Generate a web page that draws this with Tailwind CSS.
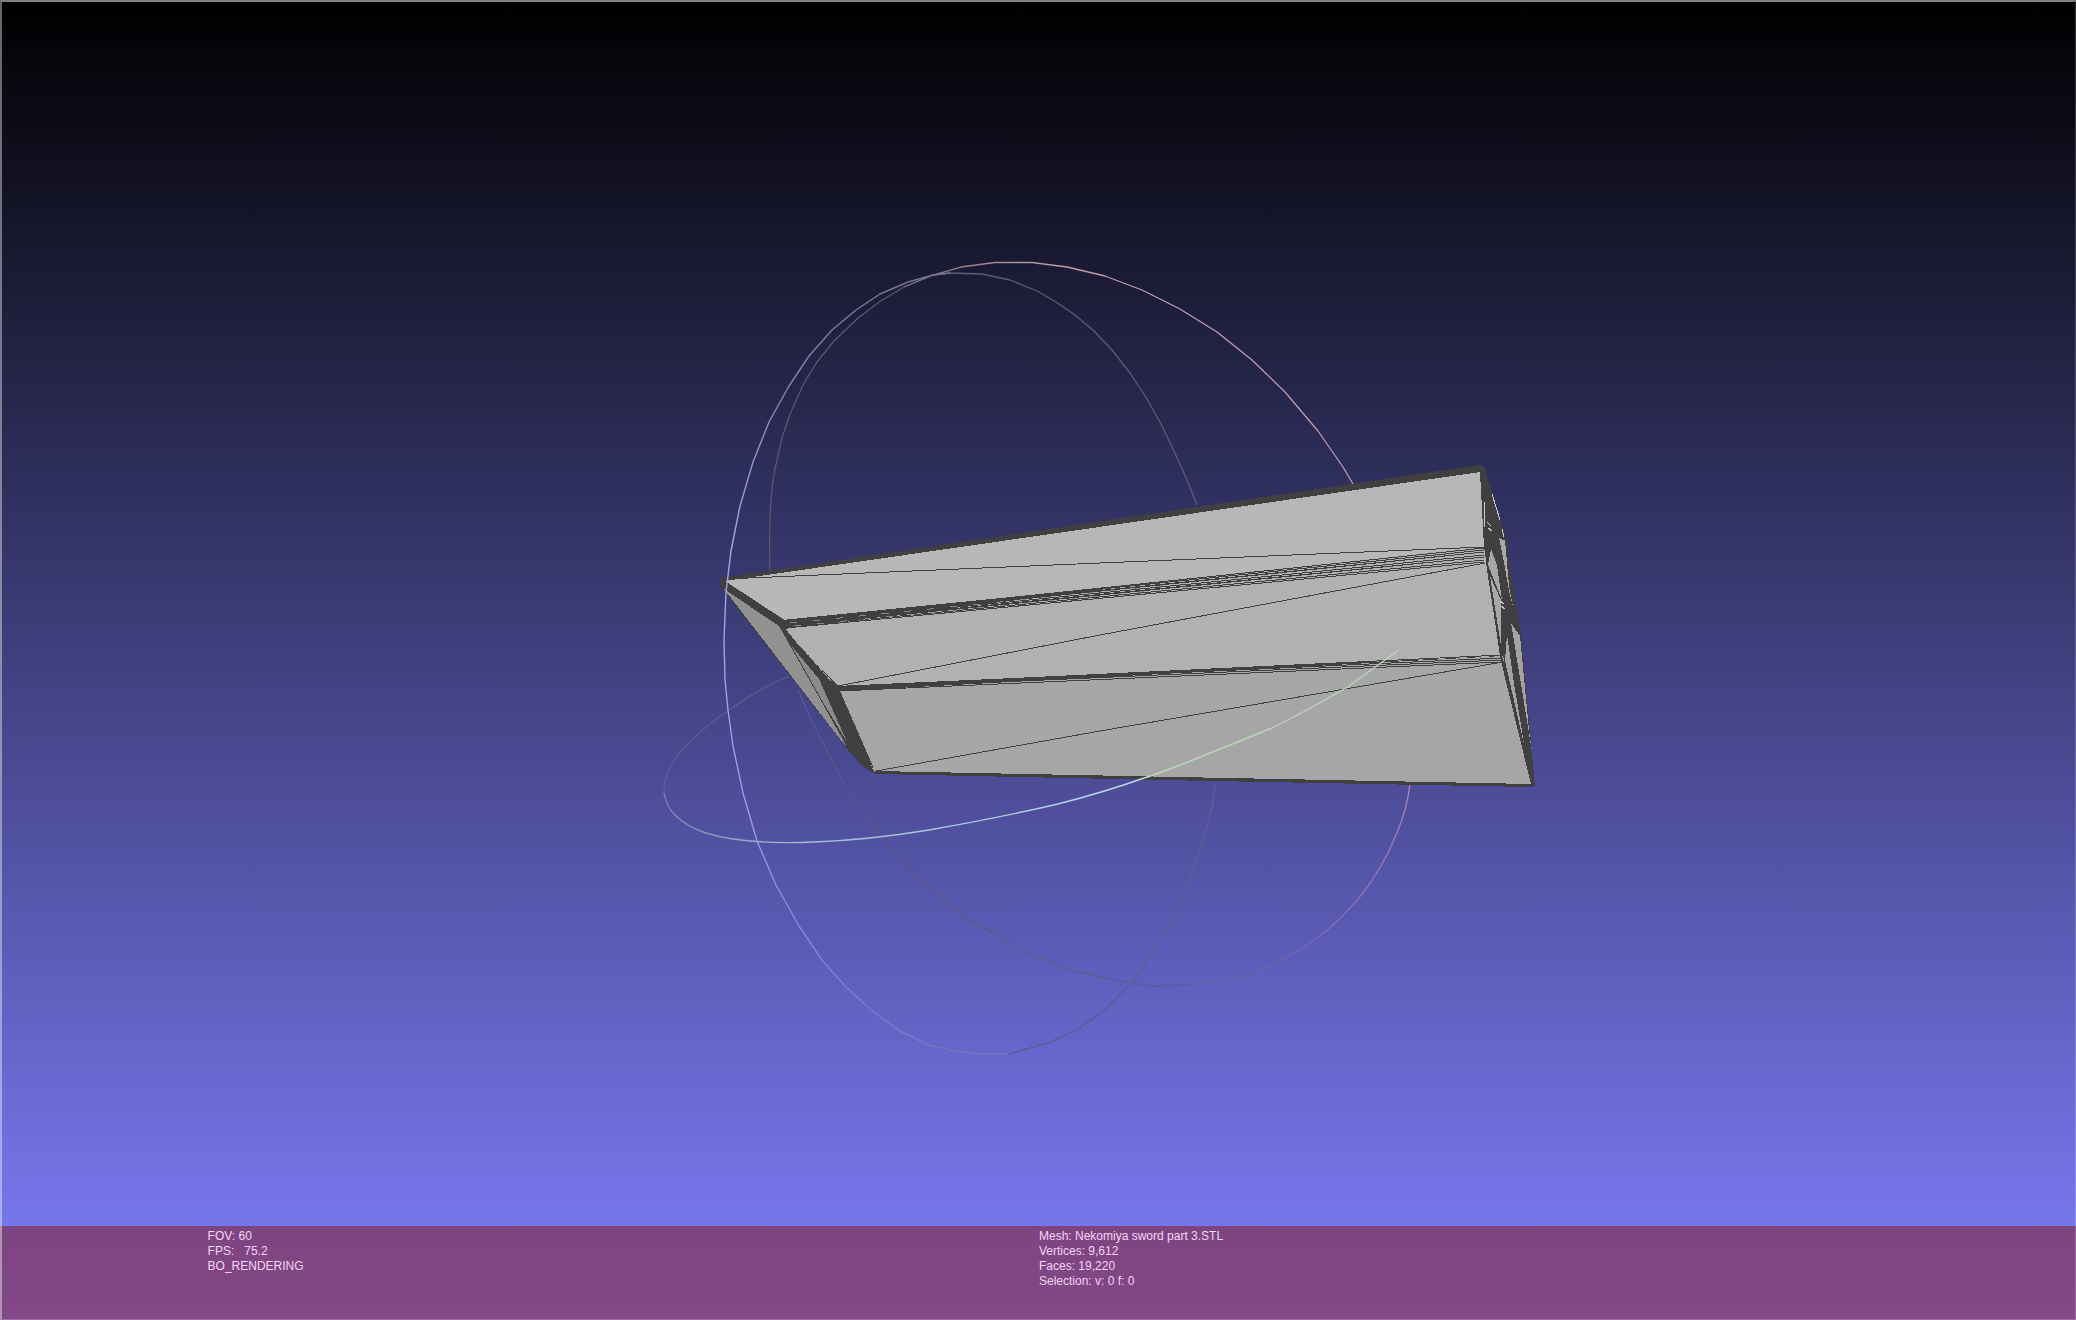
<!DOCTYPE html>
<html lang="en">
<head>
<meta charset="utf-8">
<title>Mesh viewer</title>
<script src="https://cdn.jsdelivr.net/npm/@tailwindcss/browser@4"></script>
</head>
<body class="font-['Liberation_Sans',Arial,sans-serif]">
<div class="relative flex h-screen flex-col overflow-hidden bg-linear-to-b/srgb from-black to-[#8080ff]">
  <main class="min-h-0 flex-1">
    <svg class="block h-full w-full" viewBox="0 0 2076 1226" preserveAspectRatio="xMidYMid meet" fill="none" role="img" aria-label="Wireframe view of the mesh with trackball">
      <defs>
        <linearGradient id="red" gradientUnits="userSpaceOnUse" x1="900" y1="0" x2="1060" y2="0"><stop stop-color="#777080"/><stop offset="1" stop-color="#c09aac"/></linearGradient>
        <linearGradient id="redlow" gradientUnits="userSpaceOnUse" x1="0" y1="784" x2="0" y2="985"><stop stop-color="#b48cbd"/><stop offset=".45" stop-color="#9074b4"/><stop offset=".8" stop-color="#7468ae"/><stop offset="1" stop-color="#605fa0"/></linearGradient>
        <linearGradient id="blue" gradientUnits="userSpaceOnUse" x1="0" y1="272" x2="0" y2="1054"><stop stop-color="#777289"/><stop offset=".15" stop-color="#8482b4"/><stop offset=".35" stop-color="#a7a2ee"/><stop offset=".7" stop-color="#9c96f0"/><stop offset="1" stop-color="#7473be"/></linearGradient>
        <linearGradient id="green" gradientUnits="userSpaceOnUse" x1="664" y1="0" x2="1150" y2="0"><stop stop-color="#7c83b2"/><stop offset=".25" stop-color="#9fbbd0"/><stop offset="1" stop-color="#b9dce8"/></linearGradient>
      </defs>

      <!-- far side of the trackball -->
      <g stroke-width="1.3" stroke-linejoin="round">
        <path stroke="#5a586e" d="M770 575Q768 505 775 469L782 438L790 414L804 383L817 362L834 341L857 319L879 302L904 287L933 275"/>
        <path stroke="#5e5c74" d="M933 275L950 273L982 274L1010 280L1037 291L1056 302L1075 315L1094 331L1112 350L1130 373L1147 399L1161 424L1174 451L1187 480L1197 505"/>
        <path stroke="#5f5d8c" d="M789 676Q756 690 729 710Q700 730 682 750Q663 773 664 793"/>
        <path stroke="#5a5884" d="M798 690L812 722L841 778L882 837L923 883L965 918L1000 937"/>
        <path stroke="#5d5c98" stroke-width="1.6" d="M1000 937L1030 954L1075 971L1118 981L1152 986L1190 985"/>
        <path stroke="#5e5d98" stroke-width="1.6" d="M1215 784L1212 808L1200 851L1180 902L1156 950L1132 982L1105 1010L1078 1029L1048 1043L1008 1054"/>
      </g>

      <!-- near side of the trackball hidden under the mesh -->
      <g stroke-width="1.3" stroke-linejoin="round">
        <path stroke="url(#red)" d="M904 287L933 275L961 267L995 262.500L1032 262.500L1067 267L1105 276L1142 290L1180 309L1217 332L1252 360L1285 392L1318 431L1343 467L1353 484"/>
        <path stroke="url(#redlow)" d="M1410 784Q1407 810 1396 835Q1383 867 1363 893Q1340 922 1313 941Q1284 961 1250 974Q1220 983 1190 985"/>
      </g>

      <!-- mesh faces -->
      <g shape-rendering="crispEdges">
        <path fill="#404040" d="M720 578L1479 465L1484 466L1505 535L1521 634L1535 786L1531 787L1211 781L875 774L862 766L848 750L720 586Z"/>
        <path fill="#b7b7b7" d="M725 581L1480 472L1484 547L786 621Z"/>
        <path fill="#b1b1b1" d="M786 620L1484 547L1500 656L838 686L782 628Z"/>
        <path fill="#a6a6a6" d="M840 691L1503 656L1531 784L875 771Z"/>
        <path fill="#91918f" d="M724 589L779 626L847 746L843 743Z"/>
        <path fill="#8b8b89" d="M784 637L819 679L847 742Z"/>
        <path fill="#a8a8a5" d="M1491 549L1497 565L1502 600L1488 565Z"/>
        <path fill="#a8a8a5" d="M1499 538L1506 541L1508 575L1517 622L1509 591L1504 562Z"/>
        <path fill="#a8a8a5" d="M1490 576L1501 600L1501 646Z"/>
        <path fill="#a3a3a1" d="M1511 623L1520 636L1529 730L1532 752L1522 690Z"/>
        <path fill="#a3a3a1" d="M1507 634L1515 690L1528 762L1505 661Z"/>
        <path fill="#a3a3a1" d="M1510 688L1528 764L1530 774Z"/>
      </g>

      <!-- triangle edges -->
      <g stroke="#404040" stroke-width="1" shape-rendering="crispEdges">
        <path d="M725 579L1100 563L1484 547"/>
        <path fill="#404040" stroke="none" d="M782 620L1180 580L784 629Z"/>
        <path d="M786 621L1484 550M786 622L1484 552M786 624L1484 555M786 625L1484 557M786 627L1484 560M786 628L1484 562M786 621L1484 548M786 626L1484 557M786 623L1484 552"/>
        <path stroke="#888" d="M790 623L1180 584M794 626L1160 590" stroke-dasharray="7 16"/>
        <path d="M838 686L1100 635L1485 563"/>
        <path fill="#404040" stroke="none" d="M836 686L1240 668L838 691Z"/>
        <path d="M838 687L1502 655M838 688L1502 658M838 689L1502 660M838 691L1502 662"/>
        <path d="M876 771L1100 731L1503 662M779 626L834 686M783 632L847 746"/>
        <path stroke-width="4" d="M722 584L779 623"/>
        <path stroke-width="3" d="M779 623L824 680"/>
        <path stroke="#aaa" d="M791 635L832 682M866 750L876 769M875 772L871 765" stroke-dasharray="5 2"/>
        <path stroke="#ccc" d="M1484 502L1485 527M1487 522L1491 526M1488 528L1492 531M1492 494L1500 520M1502 529L1504 537M1500 601L1504 604M1501 606L1505 609"/>
        <path stroke-width="2" d="M1487 563L1502 661L1532 784M1503 661L1530 776"/>
        <path stroke-width="4" d="M1511 640L1519 700L1531 775"/>
        <path stroke-width="2" d="M1506 540L1510 586L1517 622"/>
      </g>

      <!-- near rings drawn over the mesh -->
      <g stroke-width="1.400" stroke-linejoin="round">
        <path stroke="url(#blue)" d="M950 273L933 275L908 282L880 294L856 310L832 330L809 356L789 386L769 422L753 462L740 506L731 551L726 592L724 640L725 680L728 710L733 746L743 793L757 841L776 885L799 926L822 960L845 986L871 1010L898 1030L928 1045L955 1051Q980 1055 1008 1054"/>
        <path stroke="url(#green)" d="M664 793Q666 806 675 815Q687 827 706 833Q745 845 814 842Q868 840 929 830Q998 818 1058 804Q1105 792 1150 776"/>
        <path stroke="#b8d7b7" d="M1148 777L1183 764L1230 745L1272 728L1307 710L1346 688L1378 665L1399 650"/>
      </g>
    </svg>
  </main>

  <footer class="grid h-[94px] grid-cols-2 bg-linear-to-b/srgb from-[#7d4580] to-[#824888] pt-[3px] text-xs leading-[15px] text-[#f6d5f6]">
    <div class="whitespace-pre pl-[20%]"><p>FOV: 60</p><p>FPS:   75.2</p><p>BO_RENDERING</p></div>
    <div class="pl-px"><p>Mesh: Nekomiya sword part 3.STL</p><p>Vertices: 9,612</p><p>Faces: 19,220</p><p>Selection: v: 0 f: 0</p></div>
  </footer>
  <div class="pointer-events-none absolute inset-0 border border-t-2 border-l-2 border-white/20 border-t-white/50 border-l-white/40"></div>
</div>
</body>
</html>
